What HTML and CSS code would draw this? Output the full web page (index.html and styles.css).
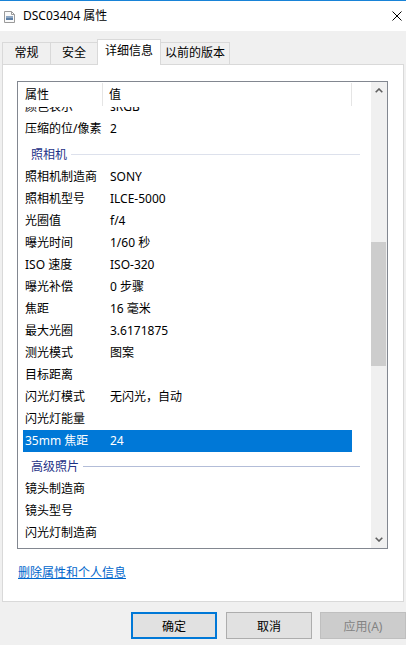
FILE: index.html
```html
<!DOCTYPE html>
<html lang="zh-CN">
<head>
<meta charset="utf-8">
<title>DSC03404 属性</title>
<link rel="stylesheet" href="styles.css">
</head>
<body>
<div class="window">
  <div class="titlebar">
    <svg class="file-icon" width="11" height="12" viewBox="0 0 11 12">
      <path d="M0.5 0.5 H7.5 L10.5 3.5 V11.5 H0.5 Z" fill="#fafafa" stroke="#9a9a9a"/>
      <path d="M7.5 0.5 V3.5 H10.5" fill="none" stroke="#9a9a9a"/>
      <rect x="2" y="5" width="7" height="4" fill="#8fa7c2"/>
      <rect x="2" y="7" width="7" height="2" fill="#5d7fa6"/>
    </svg>
    <span class="title">DSC03404 属性</span>
    <svg class="close" width="10" height="10" viewBox="0 0 10 10">
      <path d="M0.5 0.5 L9.5 9.5 M9.5 0.5 L0.5 9.5" stroke="#000" stroke-width="1"/>
    </svg>
  </div>
  <div class="body">
    <div class="tabs">
      <div class="tab t1">常规</div>
      <div class="tab t2">安全</div>
      <div class="tab t3 active">详细信息</div>
      <div class="tab t4">以前的版本</div>
    </div>
    <div class="panel">
      <div class="listbox">
        <div class="listmain">
          <div class="header">
            <div class="hcell hc1">属性</div>
            <div class="hcell hc2">值</div>
            <div class="hcell hc3"></div>
          </div>
          <div class="viewport">
            <div class="rows">
              <div class="row"><span class="k">颜色表示</span><span class="v">sRGB</span></div>
              <div class="row"><span class="k">压缩的位/像素</span><span class="v">2</span></div>
              <div class="group g1"><span class="gname">照相机</span><span class="gline"></span></div>
              <div class="row"><span class="k">照相机制造商</span><span class="v">SONY</span></div>
              <div class="row"><span class="k">照相机型号</span><span class="v">ILCE-5000</span></div>
              <div class="row"><span class="k">光圈值</span><span class="v">f/4</span></div>
              <div class="row"><span class="k">曝光时间</span><span class="v">1/60 秒</span></div>
              <div class="row"><span class="k">ISO 速度</span><span class="v">ISO-320</span></div>
              <div class="row"><span class="k">曝光补偿</span><span class="v">0 步骤</span></div>
              <div class="row"><span class="k">焦距</span><span class="v">16 毫米</span></div>
              <div class="row"><span class="k">最大光圈</span><span class="v">3.6171875</span></div>
              <div class="row"><span class="k">测光模式</span><span class="v">图案</span></div>
              <div class="row"><span class="k">目标距离</span><span class="v"></span></div>
              <div class="row"><span class="k">闪光灯模式</span><span class="v">无闪光，自动</span></div>
              <div class="row"><span class="k">闪光灯能量</span><span class="v"></span></div>
              <div class="row selected"><span class="k">35mm 焦距</span><span class="v">24</span></div>
              <div class="group g2"><span class="gname">高级照片</span><span class="gline"></span></div>
              <div class="row"><span class="k">镜头制造商</span><span class="v"></span></div>
              <div class="row"><span class="k">镜头型号</span><span class="v"></span></div>
              <div class="row"><span class="k">闪光灯制造商</span><span class="v"></span></div>
            </div>
          </div>
        </div>
        <div class="scrollbar">
          <div class="sarrow">
            <svg width="8" height="5" viewBox="0 0 8 5"><path d="M0.7 4.3 L4 1 L7.3 4.3" fill="none" stroke="#606060" stroke-width="1.6"/></svg>
          </div>
          <div class="track"><div class="thumb"></div></div>
          <div class="sarrow">
            <svg width="8" height="5" viewBox="0 0 8 5"><path d="M0.7 0.7 L4 4 L7.3 0.7" fill="none" stroke="#606060" stroke-width="1.6"/></svg>
          </div>
        </div>
      </div>
      <a class="link" href="#">删除属性和个人信息</a>
    </div>
    <div class="buttons">
      <div class="btn default">确定</div>
      <div class="btn">取消</div>
      <div class="btn disabled">应用(A)</div>
    </div>
  </div>
</div>
</body>
</html>
```

FILE: styles.css
```css
html, body {
  margin: 0;
  padding: 0;
}
body {
  width: 406px;
  height: 645px;
  overflow: hidden;
  background: #f0f0f0;
  font-family: "Noto Sans", "Noto Sans CJK SC", sans-serif;
  font-size: 12px;
  color: #000;
}
.window {
  width: 406px;
  height: 645px;
  display: flex;
  flex-direction: column;
}
.titlebar {
  height: 30px;
  border-top: 1px solid #1883d7;
  background: #fff;
  display: flex;
  align-items: center;
  position: relative;
  flex: none;
}
.file-icon {
  margin-left: 4px;
  margin-top: 1px;
}
.title {
  margin-left: 8px;
  font-size: 12px;
  line-height: 16px;
}
.close {
  margin-left: auto;
  margin-right: 4px;
}
.body {
  flex: 1;
  display: flex;
  flex-direction: column;
}
.tabs {
  height: 33px;
  display: flex;
  align-items: flex-end;
  padding-left: 2px;
  box-sizing: border-box;
  flex: none;
}
.tab {
  height: 22px;
  box-sizing: border-box;
  border: 1px solid #d9d9d9;
  border-bottom: none;
  background: #f0f0f0;
  text-align: center;
  line-height: 20px;
  font-size: 12px;
}
.t1 { width: 49px; }
.t2 { width: 48px; margin-left: -1px; }
.t3 { width: 64px; margin-left: -1px; }
.t4 { width: 70px; margin-left: -1px; }
.tab.active {
  height: 26px;
  margin-bottom: -1px;
  background: #fff;
  position: relative;
  z-index: 1;
  line-height: 21px;
}
.panel {
  margin-left: 2px;
  width: 402px;
  height: 538px;
  box-sizing: border-box;
  border: 1px solid #d9d9d9;
  background: #fff;
  padding: 16px 0 0 14px;
  flex: none;
}
.listbox {
  width: 371px;
  height: 468px;
  box-sizing: border-box;
  border: 1px solid #828790;
  display: flex;
}
.listmain {
  width: 352px;
  display: flex;
  flex-direction: column;
}
.header {
  height: 25px;
  display: flex;
  flex: none;
}
.hcell {
  box-sizing: border-box;
  line-height: 25px;
  position: relative;
}
.hc1 {
  width: 85px;
  padding-left: 7px;
  border-right: 1px solid #e5e5e5;
  margin: 1px 0;
  line-height: 23px;
}
.hc2 {
  width: 249px;
  padding-left: 6px;
  border-right: 1px solid #e5e5e5;
  margin: 1px 0;
  line-height: 23px;
}
.hc3 {
  flex: 1;
}
.viewport {
  flex: 1;
  overflow: hidden;
}
.rows {
  margin-top: -11px;
}
.row {
  height: 22px;
  margin-left: 5px;
  width: 329px;
  display: flex;
  align-items: center;
  line-height: 22px;
}
.row .k {
  width: 87px;
  padding-left: 2px;
  box-sizing: border-box;
  white-space: nowrap;
}
.row .v {
  white-space: nowrap;
}
.row.selected {
  background: #0078d7;
  color: #fff;
}
.group {
  height: 26px;
  display: flex;
  align-items: center;
  padding: 2px 10px 0 13px;
  box-sizing: border-box;
  color: #1e3287;
}
.gname {
  white-space: nowrap;
}
.gline {
  flex: 1;
  height: 1px;
  margin-left: 4px;
}
.g1 .gline { background: #dde1ec; }
.g2 .gline { background: #b3bdd8; }
.scrollbar {
  width: 16px;
  margin-left: 1px;
  background: #f0f0f0;
  display: flex;
  flex-direction: column;
}
.sarrow {
  height: 17px;
  display: flex;
  align-items: center;
  justify-content: center;
  flex: none;
}
.track {
  flex: 1;
  padding-top: 143px;
}
.thumb {
  height: 124px;
  width: 15px;
  background: #cdcdcd;
}
.link {
  display: inline-block;
  margin-top: 15px;
  margin-left: 1px;
  color: #0066cc;
  text-decoration: underline;
  line-height: 17px;
}
.buttons {
  display: flex;
  padding-left: 131px;
  margin-top: 10px;
  gap: 9px;
}
.btn {
  width: 86px;
  height: 27px;
  box-sizing: border-box;
  border: 1px solid #adadad;
  background: #e1e1e1;
  display: flex;
  align-items: center;
  justify-content: center;
  flex: none;
}
.btn.default {
  border: 2px solid #0078d7;
}
.btn.disabled {
  background: #cccccc;
  border-color: #bfbfbf;
  color: #838383;
  margin-left: -1px;
}
```
